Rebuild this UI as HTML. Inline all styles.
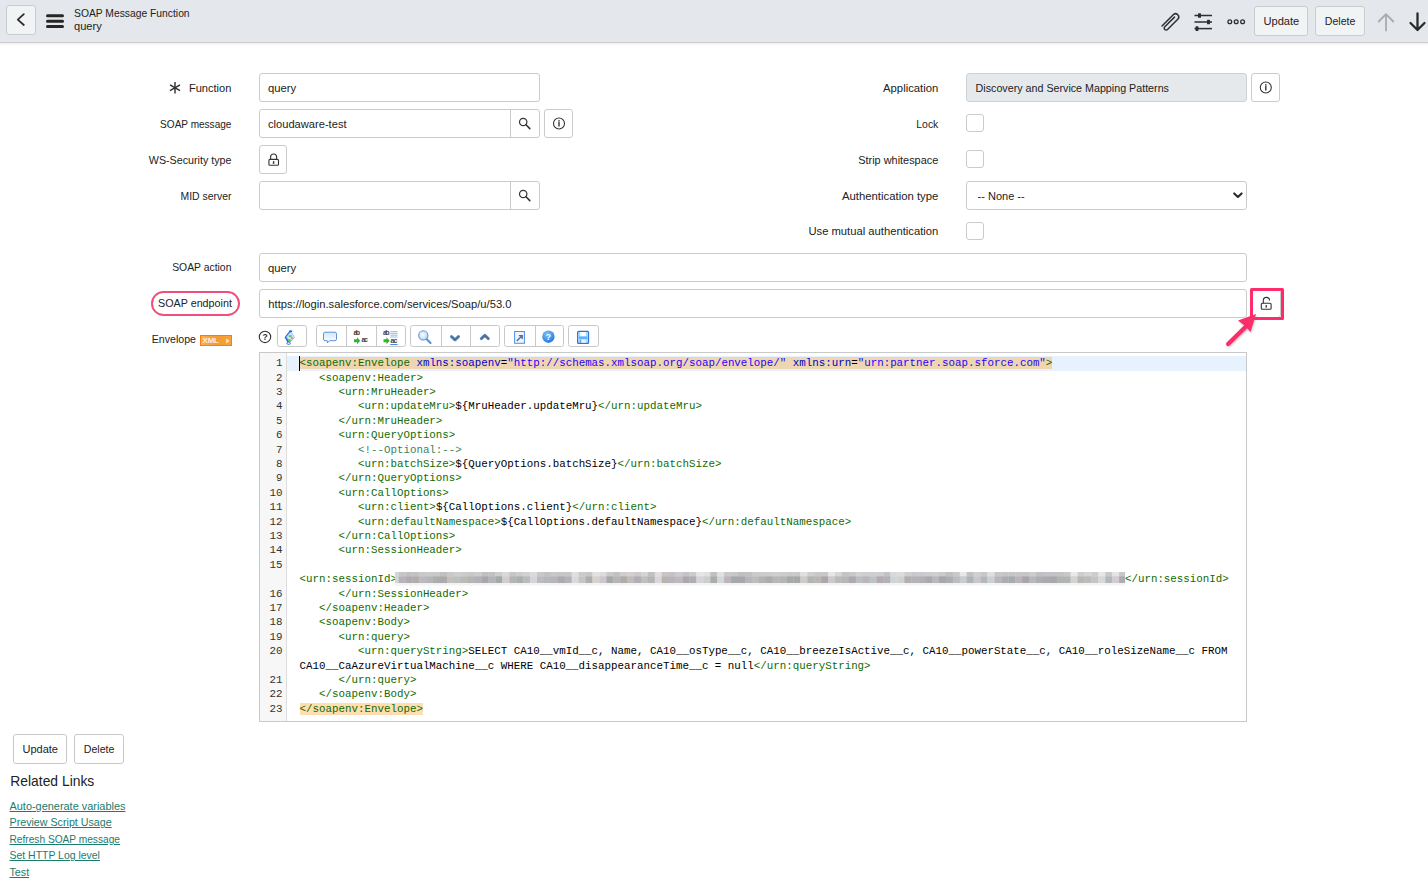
<!DOCTYPE html>
<html><head><meta charset="utf-8">
<style>
*{box-sizing:border-box;margin:0;padding:0}
html,body{width:1428px;height:886px;overflow:hidden;background:#fff}
body{position:relative;font-family:"Liberation Sans",sans-serif;color:#222;font-size:10.8px}
.a{position:absolute}
.t{position:absolute;white-space:nowrap;line-height:1}
.hdr{left:0;top:0;width:1428px;height:43px;background:#e4e8ec;border-bottom:1px solid #cbcbcb}
.shade{left:0;top:43px;width:1428px;height:3px;background:linear-gradient(#f0f0f0,#fff)}
.hbtn{position:absolute;border:1px solid #c9cbcd;border-radius:3px;background:#f2f3f5}
.inp{position:absolute;border:1px solid #cbcbcb;border-radius:3px;background:#fff}
.cb{position:absolute;width:18px;height:18px;border:1px solid #cbcbcb;border-radius:3px;background:#fff}
.lbl{position:absolute;white-space:nowrap;line-height:1;text-align:right}
.btn{position:absolute;border:1px solid #c9c9c9;border-radius:3px;background:#fff}
.tb{position:absolute;top:325px;height:21.5px;border:1px solid #c8c8c8;border-radius:2.5px;background:#fff}
.tbd{position:absolute;top:0;width:1px;height:100%;background:#c8c8c8}
.code{position:absolute;left:299.6px;top:356.1px;font-family:"Liberation Mono",monospace;font-size:10.82px;line-height:14.41px;white-space:pre;color:#000}
.gut{position:absolute;left:260px;top:356.1px;width:22.4px;text-align:right;font-family:"Liberation Mono",monospace;font-size:10.82px;line-height:14.41px;white-space:pre;color:#333}
.tg{color:#116b00}
.at{color:#00c}
.st{color:#2a00ff}
.cm{color:#3f7f5f}
.mt{background:rgba(255,150,0,.3)}
.blur{display:inline-block;width:728px;height:12px;vertical-align:-2px}
a{color:#1a7b6e;text-decoration:underline;text-underline-offset:1.2px}
</style></head><body>
<!-- header -->
<div class="a hdr"></div>
<div class="a shade"></div>
<div class="hbtn" style="left:6px;top:5px;width:30px;height:30px"></div>
<svg class="a" style="left:0;top:0" width="1428" height="42">
  <path d="M23.8 14.2 L17.8 19.6 L23.8 25" fill="none" stroke="#2b2b2b" stroke-width="1.8" stroke-linecap="round" stroke-linejoin="round"/>
  <g stroke="#262626" stroke-width="3" stroke-linecap="round"><line x1="47.5" y1="15.8" x2="62.5" y2="15.8"/><line x1="47.5" y1="21.3" x2="62.5" y2="21.3"/><line x1="47.5" y1="26.6" x2="62.5" y2="26.6"/></g>
</svg>
<div class="t" style="left:74px;top:8.56px;font-size:10.32px">SOAP Message Function</div>
<div class="t" style="left:74px;top:20.90px;font-size:11.1px">query</div>
<!-- header right -->
<svg class="a" style="left:1150px;top:0" width="100" height="42">
  <path d="M12 27.5 L23.5 16 A3.2 3.2 0 0 1 28 20.5 L17.5 31 A1.9 1.9 0 0 1 14.8 28.3 L24.5 18.6" fill="none" stroke="#2e2e2e" stroke-width="1.5" stroke-linecap="round" stroke-linejoin="round" transform="translate(0,-1.5)"/>
  <g stroke="#2e2e2e" stroke-width="1.5"><line x1="44.5" y1="15.5" x2="62" y2="15.5"/><line x1="44.5" y1="22" x2="62" y2="22"/><line x1="44.5" y1="28.6" x2="62" y2="28.6"/></g>
  <g fill="#2e2e2e"><rect x="48" y="13.2" width="3" height="4.6" rx="0.6"/><rect x="57" y="19.7" width="3" height="4.6" rx="0.6"/><rect x="45.5" y="26.3" width="3" height="4.6" rx="0.6"/></g>
  <g fill="none" stroke="#2e2e2e" stroke-width="1.3"><circle cx="79.8" cy="21.8" r="1.9"/><circle cx="86.2" cy="21.8" r="1.9"/><circle cx="92.6" cy="21.8" r="1.9"/></g>
</svg>
<div class="hbtn" style="left:1254px;top:6px;width:54px;height:30px"></div>
<div class="t" style="left:1263.5px;top:15.90px;font-size:11.1px">Update</div>
<div class="hbtn" style="left:1315px;top:6px;width:50px;height:30px"></div>
<div class="t" style="left:1324.8px;top:16.31px;font-size:10.62px">Delete</div>
<svg class="a" style="left:1370px;top:0" width="58" height="42">
  <path d="M16 30.5 V14.5 M8.7 21.5 L16 14.2 L23.3 21.5" fill="none" stroke="#a9abad" stroke-width="1.8" stroke-linecap="round" stroke-linejoin="round"/>
  <path d="M47.5 13.5 V30 M40.5 23 L47.5 30 L54.5 23" fill="none" stroke="#2b2b2b" stroke-width="2.3" stroke-linecap="round" stroke-linejoin="round"/>
</svg>

<!-- form left column -->
<svg class="a" style="left:168px;top:81px" width="15" height="14"><g stroke="#2e2e2e" stroke-width="1.4" stroke-linecap="butt"><line x1="7" y1="1" x2="7" y2="12.5"/><line x1="2" y1="3.9" x2="12" y2="9.6"/><line x1="2" y1="9.6" x2="12" y2="3.9"/></g></svg>
<div class="lbl" style="right:1196.6px;top:82.92px;font-size:11.08px">Function</div>
<div class="inp" style="left:259px;top:73px;width:281px;height:29px"></div>
<div class="t" style="left:268px;top:82.73px;font-size:11.3px">query</div>

<div class="lbl" style="right:1196.6px;top:119.78px;font-size:10.06px">SOAP message</div>
<div class="inp" style="left:259px;top:109px;width:281px;height:29px"></div>
<div class="a" style="left:510px;top:109px;width:1px;height:29px;background:#cbcbcb"></div>
<div class="t" style="left:268px;top:118.88px;font-size:11.13px">cloudaware-test</div>
<div class="inp" style="left:544px;top:109px;width:29px;height:29px"></div>

<div class="lbl" style="right:1196.6px;top:155.25px;font-size:10.69px">WS-Security type</div>
<div class="inp" style="left:259px;top:145px;width:28px;height:29px"></div>

<div class="lbl" style="right:1196.6px;top:191.99px;font-size:10.41px">MID server</div>
<div class="inp" style="left:259px;top:181px;width:281px;height:29px"></div>
<div class="a" style="left:510px;top:181px;width:1px;height:29px;background:#cbcbcb"></div>

<!-- form right column -->
<div class="lbl" style="right:489.7px;top:82.73px;font-size:11.3px">Application</div>
<div class="inp" style="left:966px;top:73px;width:281px;height:29px;background:#e6e9eb;border-color:#cfd2d4"></div>
<div class="t" style="left:975.6px;top:83.23px;font-size:10.71px">Discovery and Service Mapping Patterns</div>
<div class="inp" style="left:1251px;top:73px;width:29px;height:29px"></div>

<div class="lbl" style="right:489.7px;top:119.99px;font-size:10.41px">Lock</div>
<div class="cb" style="left:966px;top:114px"></div>
<div class="lbl" style="right:489.7px;top:155.05px;font-size:10.93px">Strip whitespace</div>
<div class="cb" style="left:966px;top:150px"></div>
<div class="lbl" style="right:489.7px;top:190.71px;font-size:11.33px">Authentication type</div>
<div class="inp" style="left:966px;top:181px;width:281px;height:29px"></div>
<div class="t" style="left:977.6px;top:190.99px;font-size:11px">-- None --</div>
<svg class="a" style="left:1230px;top:189px" width="16" height="12"><path d="M4.2 4.4 L7.9 8 L11.6 4.4" fill="none" stroke="#2b2b2b" stroke-width="2.1" stroke-linecap="round" stroke-linejoin="round"/></svg>
<div class="lbl" style="right:489.7px;top:225.79px;font-size:11.24px">Use mutual authentication</div>
<div class="cb" style="left:966px;top:222px"></div>

<!-- full-width -->
<div class="lbl" style="right:1196.6px;top:262.50px;font-size:10.39px">SOAP action</div>
<div class="inp" style="left:259px;top:253px;width:988px;height:29px"></div>
<div class="t" style="left:268px;top:262.73px;font-size:11.3px">query</div>

<div class="a" style="left:151.4px;top:291.2px;width:88.6px;height:24.6px;border:2px solid #ef4f7f;border-radius:13px"></div>
<div class="lbl" style="right:1196.1px;top:298.20px;font-size:10.75px">SOAP endpoint</div>
<div class="inp" style="left:259px;top:289px;width:988px;height:29px"></div>
<div class="t" style="left:268.3px;top:298.82px;font-size:11.2px">https://login.salesforce.com/services/Soap/u/53.0</div>
<div class="inp" style="left:1251px;top:289px;width:30px;height:29px"></div>

<div class="t" style="left:151.8px;top:334.34px;font-size:10.58px">Envelope</div>
<div class="a" style="left:200.2px;top:335.2px;width:31.8px;height:10.6px;background:linear-gradient(90deg,#fcb048,#f59a30 55%,#f8a43a);border:1px solid #ff7a0a"></div>

<!-- icons -->
<svg class="a" style="left:0;top:0" width="1428" height="886">
  <defs>
    <g id="srch"><circle cx="0" cy="0" r="3.7" fill="none" stroke="#333" stroke-width="1.2"/><line x1="2.8" y1="2.8" x2="6.6" y2="6.6" stroke="#333" stroke-width="1.6" stroke-linecap="round"/></g>
    <g id="info"><circle cx="0" cy="0" r="5.5" fill="none" stroke="#333" stroke-width="1.1"/><rect x="-0.75" y="-3.4" width="1.5" height="1.4" fill="#444"/><rect x="-0.75" y="-1.6" width="1.5" height="4.6" fill="#444"/></g>
  </defs>
  <use href="#srch" x="523.2" y="122"/>
  <use href="#srch" x="523.2" y="194"/>
  <use href="#info" x="559" y="123.5"/>
  <use href="#info" x="1265.8" y="87.5"/>
  <g fill="none" stroke="#333" stroke-width="1.1">
    <path d="M270.6 159.4 V157 A3 3 0 0 1 276.6 157 V159.4"/>
    <rect x="268.9" y="159.4" width="9.6" height="5.8" rx="1"/>
  </g>
  <path d="M273.1 161 h1 l0.4 2.8 h-1.8 z" fill="#333"/>
</svg>

<!-- envelope toolbar -->
<div class="t" style="left:202.6px;top:337.2px;font-size:8px;color:#fdeee0;font-weight:bold;letter-spacing:-0.3px">XML</div>
<svg class="a" style="left:223px;top:337px" width="8" height="8"><path d="M3.2 1.6 L6.6 4 L3.2 6.4 z" fill="#fde8c0"/></svg>
<div class="tb" style="left:276.5px;width:30px"></div>
<div class="tb" style="left:316px;width:90px"><div class="tbd" style="left:29px"></div><div class="tbd" style="left:58.5px"></div></div>
<div class="tb" style="left:410px;width:90px"><div class="tbd" style="left:29.5px;width:1.6px"></div><div class="tbd" style="left:58.8px"></div></div>
<div class="tb" style="left:504px;width:60px"><div class="tbd" style="left:29.5px"></div></div>
<div class="tb" style="left:568px;width:30.5px"></div>
<svg class="a" style="left:250px;top:320px" width="360" height="30">
  <defs>
    <linearGradient id="lg1" x1="0" y1="0" x2="0" y2="1"><stop offset="0" stop-color="#d6e6fb"/><stop offset="1" stop-color="#fff"/></linearGradient>
    <radialGradient id="rg1" cx="0.45" cy="0.45" r="0.6"><stop offset="0" stop-color="#fff"/><stop offset="1" stop-color="#aed2f7"/></radialGradient>
    <radialGradient id="rg2" cx="0.4" cy="0.3" r="0.8"><stop offset="0" stop-color="#7cc4ff"/><stop offset="1" stop-color="#1a6fd8"/></radialGradient>
  </defs>
  <!-- help circle -->
  <circle cx="15" cy="16.9" r="5.7" fill="none" stroke="#333" stroke-width="1.1"/>
  <text x="15" y="20.1" font-family="Liberation Sans" font-weight="bold" font-size="8.5" text-anchor="middle" fill="#333">?</text>
  <!-- format icon -->
  <path d="M39.8 10.6 L42 11.6 L36.3 17 L39.8 22.6 L38.6 24.4 L34.6 17.3 Z" fill="#2466e6"/>
  <path d="M40 12.2 L36.6 16.8 L39.9 22 L44.6 17.6 L41.8 13.2 Z" fill="#d9e8fb" stroke="#7aa8f0" stroke-width="0.7"/>
  <ellipse cx="38.6" cy="23.2" rx="1.7" ry="1.2" fill="#fff" stroke="#2a6ef0" stroke-width="1"/>
  <ellipse cx="40.8" cy="11.2" rx="1.6" ry="0.9" fill="#2466e6"/>
  <rect x="38.7" y="15.2" width="3" height="1.9" fill="#55cc55"/><rect x="37.9" y="19.3" width="3" height="1.9" fill="#55cc55"/><rect x="40.9" y="17.2" width="1.9" height="1.9" fill="#ef7a7a"/>
  <!-- comment bubble -->
  <path d="M75 12.2 H85 A1.5 1.5 0 0 1 86.5 13.7 V19.2 A1.5 1.5 0 0 1 85 20.7 H79.5 L77.3 23 V20.7 H75 A1.5 1.5 0 0 1 73.5 19.2 V13.7 A1.5 1.5 0 0 1 75 12.2 Z" fill="url(#lg1)" stroke="#5a93d8" stroke-width="1"/>
  <!-- ab->ac -->
  <text x="103.6" y="15.4" font-family="Liberation Sans" font-weight="bold" font-size="7" fill="#444" textLength="6.5">ab</text>
  <path d="M104 19.2 h3 v-2 l3.2 3.5 l-3.2 3.5 v-2 h-3 z" fill="#2fb52f"/>
  <text x="111.4" y="22.2" font-family="Liberation Sans" font-weight="bold" font-size="7" fill="#444" textLength="6.5">ac</text>
  <text x="133" y="15.4" font-family="Liberation Sans" font-weight="bold" font-size="7" fill="#444" textLength="6.5">ab</text>
  <g stroke="#8db6e6" stroke-width="0.9"><line x1="140.2" y1="11.6" x2="147.6" y2="11.6"/><line x1="140.2" y1="13.4" x2="147.6" y2="13.4"/><line x1="140.2" y1="15.2" x2="147.6" y2="15.2"/><line x1="140.2" y1="17" x2="147.6" y2="17"/></g>
  <path d="M133.5 19.2 h3 v-2 l3.2 3.5 l-3.2 3.5 v-2 h-3 z" fill="#2fb52f"/>
  <text x="140.4" y="23.2" font-family="Liberation Sans" font-weight="bold" font-size="7" fill="#444" textLength="7">ac</text>
  <line x1="140.2" y1="24.6" x2="147.6" y2="24.6" stroke="#3b7ddd" stroke-width="1"/>
  <!-- magnifier -->
  <line x1="176.5" y1="19" x2="180.5" y2="23" stroke="#5c8fd0" stroke-width="2.2" stroke-linecap="round"/>
  <circle cx="173.3" cy="15.4" r="4.6" fill="url(#rg1)" stroke="#5b9be0" stroke-width="1.1"/>
  <!-- chevrons -->
  <path d="M201.5 16.6 L205 19.8 L208.5 16.6" fill="none" stroke="#4a86d6" stroke-width="3" stroke-linecap="round" stroke-linejoin="round"/>
  <path d="M201.5 16.6 L205 19.8 L208.5 16.6" fill="none" stroke="#666" stroke-width="1.2" stroke-linecap="round" stroke-linejoin="round"/>
  <path d="M231.3 18.6 L234.8 15.4 L238.3 18.6" fill="none" stroke="#4a86d6" stroke-width="3" stroke-linecap="round" stroke-linejoin="round"/>
  <path d="M231.3 18.6 L234.8 15.4 L238.3 18.6" fill="none" stroke="#666" stroke-width="1.2" stroke-linecap="round" stroke-linejoin="round"/>
  <!-- maximize -->
  <rect x="264.6" y="11.5" width="9.8" height="11.8" fill="#eef5fd" stroke="#4f8ee6" stroke-width="1"/>
  <path d="M266.8 21 L271.8 16 M268.8 15.6 H272.2 V19" fill="none" stroke="#4a6f99" stroke-width="1.4"/>
  <!-- help blue -->
  <circle cx="298.4" cy="16.7" r="6.2" fill="url(#rg2)"/>
  <text x="298.4" y="20" font-family="Liberation Sans" font-weight="bold" font-size="8.5" text-anchor="middle" fill="#fff">?</text>
  <!-- save -->
  <rect x="327.6" y="11.4" width="11" height="12" rx="1" fill="#a8dcff" stroke="#2f6fe0" stroke-width="1.1"/>
  <rect x="330.2" y="12" width="5.6" height="4.3" fill="#fdfeff"/>
  <rect x="329" y="16.5" width="8.4" height="2.6" fill="#55b8ff"/>
  <rect x="331.4" y="19.5" width="4.4" height="3.3" fill="#e9f3fc"/>
  <rect x="330.2" y="19.8" width="0.9" height="3" fill="#7d83d0"/>
  </svg>

<!-- editor -->
<div class="a" style="left:259px;top:352px;width:988px;height:370px;border:1px solid #c9c9c9;background:#fff"></div>
<div class="a" style="left:260px;top:353px;width:26.5px;height:368px;background:#f7f7f7;border-right:1px solid #ddd"></div>
<div class="a" style="left:287px;top:356.1px;width:959px;height:14.41px;background:#e8f2ff"></div>
<div class="a" style="left:299px;top:356.1px;width:1.3px;height:14.6px;background:#000"></div>
<div class="code"><span class="mt"><span class="tg">&lt;soapenv:Envelope</span> <span class="at">xmlns:soapenv</span>=<span class="st">"http://schemas.xmlsoap.org/soap/envelope/"</span> <span class="at">xmlns:urn</span>=<span class="st">"urn:partner.soap.sforce.com"</span><span class="tg">&gt;</span></span>
   <span class="tg">&lt;soapenv:Header&gt;</span>
      <span class="tg">&lt;urn:MruHeader&gt;</span>
         <span class="tg">&lt;urn:updateMru&gt;</span>${MruHeader.updateMru}<span class="tg">&lt;/urn:updateMru&gt;</span>
      <span class="tg">&lt;/urn:MruHeader&gt;</span>
      <span class="tg">&lt;urn:QueryOptions&gt;</span>
         <span class="cm">&lt;!--Optional:--&gt;</span>
         <span class="tg">&lt;urn:batchSize&gt;</span>${QueryOptions.batchSize}<span class="tg">&lt;/urn:batchSize&gt;</span>
      <span class="tg">&lt;/urn:QueryOptions&gt;</span>
      <span class="tg">&lt;urn:CallOptions&gt;</span>
         <span class="tg">&lt;urn:client&gt;</span>${CallOptions.client}<span class="tg">&lt;/urn:client&gt;</span>
         <span class="tg">&lt;urn:defaultNamespace&gt;</span>${CallOptions.defaultNamespace}<span class="tg">&lt;/urn:defaultNamespace&gt;</span>
      <span class="tg">&lt;/urn:CallOptions&gt;</span>
      <span class="tg">&lt;urn:SessionHeader&gt;</span>
         
<span class="tg">&lt;urn:sessionId&gt;</span><span class="blur"></span><span class="tg">&lt;/urn:sessionId&gt;</span>
      <span class="tg">&lt;/urn:SessionHeader&gt;</span>
   <span class="tg">&lt;/soapenv:Header&gt;</span>
   <span class="tg">&lt;soapenv:Body&gt;</span>
      <span class="tg">&lt;urn:query&gt;</span>
         <span class="tg">&lt;urn:queryString&gt;</span>SELECT CA10__vmId__c, Name, CA10__osType__c, CA10__breezeIsActive__c, CA10__powerState__c, CA10__roleSizeName__c FROM
CA10__CaAzureVirtualMachine__c WHERE CA10__disappearanceTime__c = null<span class="tg">&lt;/urn:queryString&gt;</span>
      <span class="tg">&lt;/urn:query&gt;</span>
   <span class="tg">&lt;/soapenv:Body&gt;</span>
<span class="mt"><span class="tg">&lt;/soapenv:Envelope&gt;</span></span></div>
<div class="gut">1
2
3
4
5
6
7
8
9
10
11
12
13
14
15

16
17
18
19
20

21
22
23</div>

<svg class="a" style="left:0;top:0" width="1428" height="886"><defs><filter id="bl" x="-1%" y="-30%" width="102%" height="160%"><feGaussianBlur stdDeviation="0.6"/></filter></defs><g filter="url(#bl)"><rect x="394.9" y="572" width="3.5" height="11.2" fill="#d0dbd0"/><rect x="398.40" y="572" width="7.23" height="4.3" fill="#c7c4ca"/><rect x="398.40" y="576.2" width="7.23" height="7" fill="#b6b3b9"/><rect x="405.33" y="572" width="7.23" height="4.3" fill="#c2bfc5"/><rect x="405.33" y="576.2" width="7.23" height="7" fill="#aeabb1"/><rect x="412.26" y="572" width="7.23" height="4.3" fill="#c4c1be"/><rect x="412.26" y="576.2" width="7.23" height="7" fill="#b0adaa"/><rect x="419.19" y="572" width="7.23" height="4.3" fill="#c9c6cc"/><rect x="419.19" y="576.2" width="7.23" height="7" fill="#bbb8be"/><rect x="426.12" y="572" width="7.23" height="4.3" fill="#c7cbcb"/><rect x="426.12" y="576.2" width="7.23" height="7" fill="#b3b7b7"/><rect x="433.05" y="572" width="7.23" height="4.3" fill="#c9c9c9"/><rect x="433.05" y="576.2" width="7.23" height="7" fill="#adadad"/><rect x="439.98" y="572" width="7.23" height="4.3" fill="#c0c0c0"/><rect x="439.98" y="576.2" width="7.23" height="7" fill="#aaaaaa"/><rect x="446.91" y="572" width="7.23" height="4.3" fill="#cbc8c5"/><rect x="446.91" y="576.2" width="7.23" height="7" fill="#c3c0bd"/><rect x="453.84" y="572" width="7.23" height="4.3" fill="#ccd0d0"/><rect x="453.84" y="576.2" width="7.23" height="7" fill="#bcc0c0"/><rect x="460.77" y="572" width="7.23" height="4.3" fill="#cdcac7"/><rect x="460.77" y="576.2" width="7.23" height="7" fill="#bcb9b6"/><rect x="467.70" y="572" width="7.23" height="4.3" fill="#c8c8c8"/><rect x="467.70" y="576.2" width="7.23" height="7" fill="#b5b5b5"/><rect x="474.63" y="572" width="7.23" height="4.3" fill="#cecad0"/><rect x="474.63" y="576.2" width="7.23" height="7" fill="#b4b0b6"/><rect x="481.56" y="572" width="7.23" height="4.3" fill="#c1bec4"/><rect x="481.56" y="576.2" width="7.23" height="7" fill="#a8a5ab"/><rect x="488.49" y="572" width="7.23" height="4.3" fill="#bfc1c3"/><rect x="488.49" y="576.2" width="7.23" height="7" fill="#b2b4b6"/><rect x="495.42" y="572" width="7.23" height="4.3" fill="#cacece"/><rect x="495.42" y="576.2" width="7.23" height="7" fill="#a5a9a9"/><rect x="502.35" y="572" width="7.23" height="4.3" fill="#dbd8d5"/><rect x="502.35" y="576.2" width="7.23" height="7" fill="#d1cecb"/><rect x="509.28" y="572" width="7.23" height="4.3" fill="#c6c6c6"/><rect x="509.28" y="576.2" width="7.23" height="7" fill="#b4b4b4"/><rect x="516.21" y="572" width="7.23" height="4.3" fill="#c9cdcd"/><rect x="516.21" y="576.2" width="7.23" height="7" fill="#abafaf"/><rect x="523.14" y="572" width="7.23" height="4.3" fill="#cfd1d3"/><rect x="523.14" y="576.2" width="7.23" height="7" fill="#b9bbbd"/><rect x="530.07" y="572" width="7.23" height="4.3" fill="#dcd8de"/><rect x="530.07" y="576.2" width="7.23" height="7" fill="#d7d3d9"/><rect x="537.00" y="572" width="7.23" height="4.3" fill="#c8c8c8"/><rect x="537.00" y="576.2" width="7.23" height="7" fill="#bcbcbc"/><rect x="543.93" y="572" width="7.23" height="4.3" fill="#bfc3c3"/><rect x="543.93" y="576.2" width="7.23" height="7" fill="#b4b8b8"/><rect x="550.86" y="572" width="7.23" height="4.3" fill="#cac6cc"/><rect x="550.86" y="576.2" width="7.23" height="7" fill="#b8b4ba"/><rect x="557.79" y="572" width="7.23" height="4.3" fill="#c3c7c7"/><rect x="557.79" y="576.2" width="7.23" height="7" fill="#a9adad"/><rect x="564.72" y="572" width="7.23" height="4.3" fill="#c8c4ca"/><rect x="564.72" y="576.2" width="7.23" height="7" fill="#b6b2b8"/><rect x="571.65" y="572" width="7.23" height="4.3" fill="#e0e0e0"/><rect x="571.65" y="576.2" width="7.23" height="7" fill="#dadada"/><rect x="578.58" y="572" width="7.23" height="4.3" fill="#cbcbcb"/><rect x="578.58" y="576.2" width="7.23" height="7" fill="#c5c5c5"/><rect x="585.51" y="572" width="7.23" height="4.3" fill="#c5c7c9"/><rect x="585.51" y="576.2" width="7.23" height="7" fill="#acaeb0"/><rect x="592.44" y="572" width="7.23" height="4.3" fill="#e3e0dd"/><rect x="592.44" y="576.2" width="7.23" height="7" fill="#d5d2cf"/><rect x="599.37" y="572" width="7.23" height="4.3" fill="#dddae0"/><rect x="599.37" y="576.2" width="7.23" height="7" fill="#cac7cd"/><rect x="606.30" y="572" width="7.23" height="4.3" fill="#c7c9cb"/><rect x="606.30" y="576.2" width="7.23" height="7" fill="#a6a8aa"/><rect x="613.23" y="572" width="7.23" height="4.3" fill="#c2bfc5"/><rect x="613.23" y="576.2" width="7.23" height="7" fill="#b6b3b9"/><rect x="620.16" y="572" width="7.23" height="4.3" fill="#d0cdca"/><rect x="620.16" y="576.2" width="7.23" height="7" fill="#afaca9"/><rect x="627.09" y="572" width="7.23" height="4.3" fill="#d3cfd5"/><rect x="627.09" y="576.2" width="7.23" height="7" fill="#bfbbc1"/><rect x="634.02" y="572" width="7.23" height="4.3" fill="#cdc9cf"/><rect x="634.02" y="576.2" width="7.23" height="7" fill="#b1adb3"/><rect x="640.95" y="572" width="7.23" height="4.3" fill="#d7d4d1"/><rect x="640.95" y="576.2" width="7.23" height="7" fill="#c2bfbc"/><rect x="647.88" y="572" width="7.23" height="4.3" fill="#c0c0c0"/><rect x="647.88" y="576.2" width="7.23" height="7" fill="#b5b5b5"/><rect x="654.81" y="572" width="7.23" height="4.3" fill="#e1dde3"/><rect x="654.81" y="576.2" width="7.23" height="7" fill="#dad6dc"/><rect x="661.74" y="572" width="7.23" height="4.3" fill="#c7c4c1"/><rect x="661.74" y="576.2" width="7.23" height="7" fill="#b7b4b1"/><rect x="668.67" y="572" width="7.23" height="4.3" fill="#c4c1c7"/><rect x="668.67" y="576.2" width="7.23" height="7" fill="#b7b4ba"/><rect x="675.60" y="572" width="7.23" height="4.3" fill="#cecad0"/><rect x="675.60" y="576.2" width="7.23" height="7" fill="#bdb9bf"/><rect x="682.53" y="572" width="7.23" height="4.3" fill="#c6c2c8"/><rect x="682.53" y="576.2" width="7.23" height="7" fill="#aca8ae"/><rect x="689.46" y="572" width="7.23" height="4.3" fill="#cbcbcb"/><rect x="689.46" y="576.2" width="7.23" height="7" fill="#aeaeae"/><rect x="696.39" y="572" width="7.23" height="4.3" fill="#e7e3e9"/><rect x="696.39" y="576.2" width="7.23" height="7" fill="#d7d3d9"/><rect x="703.32" y="572" width="7.23" height="4.3" fill="#dee0e2"/><rect x="703.32" y="576.2" width="7.23" height="7" fill="#cbcdcf"/><rect x="710.25" y="572" width="7.23" height="4.3" fill="#bfc1c3"/><rect x="710.25" y="576.2" width="7.23" height="7" fill="#aaacae"/><rect x="717.18" y="572" width="7.23" height="4.3" fill="#dee2e2"/><rect x="717.18" y="576.2" width="7.23" height="7" fill="#d3d7d7"/><rect x="724.11" y="572" width="7.23" height="4.3" fill="#cbc7cd"/><rect x="724.11" y="576.2" width="7.23" height="7" fill="#bab6bc"/><rect x="731.04" y="572" width="7.23" height="4.3" fill="#c5c7c9"/><rect x="731.04" y="576.2" width="7.23" height="7" fill="#a6a8aa"/><rect x="737.97" y="572" width="7.23" height="4.3" fill="#c0bdc3"/><rect x="737.97" y="576.2" width="7.23" height="7" fill="#a9a6ac"/><rect x="744.90" y="572" width="7.23" height="4.3" fill="#bec2c2"/><rect x="744.90" y="576.2" width="7.23" height="7" fill="#b4b8b8"/><rect x="751.83" y="572" width="7.23" height="4.3" fill="#cacaca"/><rect x="751.83" y="576.2" width="7.23" height="7" fill="#bdbdbd"/><rect x="758.76" y="572" width="7.23" height="4.3" fill="#cbcbcb"/><rect x="758.76" y="576.2" width="7.23" height="7" fill="#b3b3b3"/><rect x="765.69" y="572" width="7.23" height="4.3" fill="#caccce"/><rect x="765.69" y="576.2" width="7.23" height="7" fill="#aaacae"/><rect x="772.62" y="572" width="7.23" height="4.3" fill="#cecece"/><rect x="772.62" y="576.2" width="7.23" height="7" fill="#b7b7b7"/><rect x="779.55" y="572" width="7.23" height="4.3" fill="#cccccc"/><rect x="779.55" y="576.2" width="7.23" height="7" fill="#b5b5b5"/><rect x="786.48" y="572" width="7.23" height="4.3" fill="#c6caca"/><rect x="786.48" y="576.2" width="7.23" height="7" fill="#a5a9a9"/><rect x="793.41" y="572" width="7.23" height="4.3" fill="#c9c9c9"/><rect x="793.41" y="576.2" width="7.23" height="7" fill="#a8a8a8"/><rect x="800.34" y="572" width="7.23" height="4.3" fill="#e2dfdc"/><rect x="800.34" y="576.2" width="7.23" height="7" fill="#cecbc8"/><rect x="807.27" y="572" width="7.23" height="4.3" fill="#cbcfcf"/><rect x="807.27" y="576.2" width="7.23" height="7" fill="#b1b5b5"/><rect x="814.20" y="572" width="7.23" height="4.3" fill="#cac7c4"/><rect x="814.20" y="576.2" width="7.23" height="7" fill="#b9b6b3"/><rect x="821.13" y="572" width="7.23" height="4.3" fill="#c8c5cb"/><rect x="821.13" y="576.2" width="7.23" height="7" fill="#aaa7ad"/><rect x="828.06" y="572" width="7.23" height="4.3" fill="#e6e6e6"/><rect x="828.06" y="576.2" width="7.23" height="7" fill="#cacaca"/><rect x="834.99" y="572" width="7.23" height="4.3" fill="#d7d4da"/><rect x="834.99" y="576.2" width="7.23" height="7" fill="#bcb9bf"/><rect x="841.92" y="572" width="7.23" height="4.3" fill="#c4c4c4"/><rect x="841.92" y="576.2" width="7.23" height="7" fill="#b7b7b7"/><rect x="848.85" y="572" width="7.23" height="4.3" fill="#cac7cd"/><rect x="848.85" y="576.2" width="7.23" height="7" fill="#aca9af"/><rect x="855.78" y="572" width="7.23" height="4.3" fill="#cfd3d3"/><rect x="855.78" y="576.2" width="7.23" height="7" fill="#bbbfbf"/><rect x="862.71" y="572" width="7.23" height="4.3" fill="#d0ccd2"/><rect x="862.71" y="576.2" width="7.23" height="7" fill="#b9b5bb"/><rect x="869.64" y="572" width="7.23" height="4.3" fill="#cbcfcf"/><rect x="869.64" y="576.2" width="7.23" height="7" fill="#bec2c2"/><rect x="876.57" y="572" width="7.23" height="4.3" fill="#d0ccd2"/><rect x="876.57" y="576.2" width="7.23" height="7" fill="#b0acb2"/><rect x="883.50" y="572" width="7.23" height="4.3" fill="#c5c1c7"/><rect x="883.50" y="576.2" width="7.23" height="7" fill="#b4b0b6"/><rect x="890.43" y="572" width="7.23" height="4.3" fill="#d5d9d9"/><rect x="890.43" y="576.2" width="7.23" height="7" fill="#d0d4d4"/><rect x="897.36" y="572" width="7.23" height="4.3" fill="#dcdcdc"/><rect x="897.36" y="576.2" width="7.23" height="7" fill="#d0d0d0"/><rect x="904.29" y="572" width="7.23" height="4.3" fill="#d0ccd2"/><rect x="904.29" y="576.2" width="7.23" height="7" fill="#b2aeb4"/><rect x="911.22" y="572" width="7.23" height="4.3" fill="#cac7cd"/><rect x="911.22" y="576.2" width="7.23" height="7" fill="#b4b1b7"/><rect x="918.15" y="572" width="7.23" height="4.3" fill="#cbc8ce"/><rect x="918.15" y="576.2" width="7.23" height="7" fill="#b2afb5"/><rect x="925.08" y="572" width="7.23" height="4.3" fill="#cdcdcd"/><rect x="925.08" y="576.2" width="7.23" height="7" fill="#aaaaaa"/><rect x="932.01" y="572" width="7.23" height="4.3" fill="#d0cdd3"/><rect x="932.01" y="576.2" width="7.23" height="7" fill="#bab7bd"/><rect x="938.94" y="572" width="7.23" height="4.3" fill="#ccc8ce"/><rect x="938.94" y="576.2" width="7.23" height="7" fill="#aaa6ac"/><rect x="945.87" y="572" width="7.23" height="4.3" fill="#bec0c2"/><rect x="945.87" y="576.2" width="7.23" height="7" fill="#acaeb0"/><rect x="952.80" y="572" width="7.23" height="4.3" fill="#c6caca"/><rect x="952.80" y="576.2" width="7.23" height="7" fill="#babebe"/><rect x="959.73" y="572" width="7.23" height="4.3" fill="#e5e9e9"/><rect x="959.73" y="576.2" width="7.23" height="7" fill="#c8cccc"/><rect x="966.66" y="572" width="7.23" height="4.3" fill="#bec2c2"/><rect x="966.66" y="576.2" width="7.23" height="7" fill="#b0b4b4"/><rect x="973.59" y="572" width="7.23" height="4.3" fill="#d2ced4"/><rect x="973.59" y="576.2" width="7.23" height="7" fill="#cac6cc"/><rect x="980.52" y="572" width="7.23" height="4.3" fill="#c5c9c9"/><rect x="980.52" y="576.2" width="7.23" height="7" fill="#b4b8b8"/><rect x="987.45" y="572" width="7.23" height="4.3" fill="#dddfe1"/><rect x="987.45" y="576.2" width="7.23" height="7" fill="#cdcfd1"/><rect x="994.38" y="572" width="7.23" height="4.3" fill="#c8c5cb"/><rect x="994.38" y="576.2" width="7.23" height="7" fill="#b8b5bb"/><rect x="1001.31" y="572" width="7.23" height="4.3" fill="#c3c7c7"/><rect x="1001.31" y="576.2" width="7.23" height="7" fill="#aaaeae"/><rect x="1008.24" y="572" width="7.23" height="4.3" fill="#c3c7c7"/><rect x="1008.24" y="576.2" width="7.23" height="7" fill="#a7abab"/><rect x="1015.17" y="572" width="7.23" height="4.3" fill="#c9c5cb"/><rect x="1015.17" y="576.2" width="7.23" height="7" fill="#b8b4ba"/><rect x="1022.10" y="572" width="7.23" height="4.3" fill="#c6c3c9"/><rect x="1022.10" y="576.2" width="7.23" height="7" fill="#a8a5ab"/><rect x="1029.03" y="572" width="7.23" height="4.3" fill="#caccce"/><rect x="1029.03" y="576.2" width="7.23" height="7" fill="#b6b8ba"/><rect x="1035.96" y="572" width="7.23" height="4.3" fill="#bec2c2"/><rect x="1035.96" y="576.2" width="7.23" height="7" fill="#abafaf"/><rect x="1042.89" y="572" width="7.23" height="4.3" fill="#c5c1c7"/><rect x="1042.89" y="576.2" width="7.23" height="7" fill="#ada9af"/><rect x="1049.82" y="572" width="7.23" height="4.3" fill="#c4c1c7"/><rect x="1049.82" y="576.2" width="7.23" height="7" fill="#aaa7ad"/><rect x="1056.75" y="572" width="7.23" height="4.3" fill="#c1c5c5"/><rect x="1056.75" y="576.2" width="7.23" height="7" fill="#afb3b3"/><rect x="1063.68" y="572" width="7.23" height="4.3" fill="#c8c8c8"/><rect x="1063.68" y="576.2" width="7.23" height="7" fill="#b3b3b3"/><rect x="1070.61" y="572" width="7.23" height="4.3" fill="#ebe8e5"/><rect x="1070.61" y="576.2" width="7.23" height="7" fill="#d5d2cf"/><rect x="1077.54" y="572" width="7.23" height="4.3" fill="#cecece"/><rect x="1077.54" y="576.2" width="7.23" height="7" fill="#b7b7b7"/><rect x="1084.47" y="572" width="7.23" height="4.3" fill="#d5d5d5"/><rect x="1084.47" y="576.2" width="7.23" height="7" fill="#bbbbbb"/><rect x="1091.40" y="572" width="7.23" height="4.3" fill="#cfccc9"/><rect x="1091.40" y="576.2" width="7.23" height="7" fill="#c6c3c0"/><rect x="1098.33" y="572" width="7.23" height="4.3" fill="#e4e8e8"/><rect x="1098.33" y="576.2" width="7.23" height="7" fill="#d5d9d9"/><rect x="1105.26" y="572" width="7.23" height="4.3" fill="#c6caca"/><rect x="1105.26" y="576.2" width="7.23" height="7" fill="#b4b8b8"/><rect x="1112.19" y="572" width="7.23" height="4.3" fill="#e5e2e8"/><rect x="1112.19" y="576.2" width="7.23" height="7" fill="#cfccd2"/><rect x="1119.12" y="572" width="5.98" height="4.3" fill="#c8c5cb"/><rect x="1119.12" y="576.2" width="5.98" height="7" fill="#adaab0"/></g><rect x="394.9" y="583.2" width="730" height="2.3" fill="#f2f4f2"/></svg>
<!-- pink highlight + arrow -->
<div class="a" style="left:1249.5px;top:287.5px;width:34px;height:32.5px;border:3px solid #fd2d6c;border-radius:1.5px"></div>
<svg class="a" style="left:1200px;top:280px" width="100" height="80">
  <defs><filter id="sh" x="-50%" y="-50%" width="200%" height="200%"><feGaussianBlur stdDeviation="1"/></filter></defs>
  <g fill="none" stroke="#333" stroke-width="1.1">
    <path d="M63.3 23.2 V20.5 A3.1 3.1 0 0 1 69.5 20.5"/>
    <rect x="61.3" y="23.2" width="9.8" height="6" rx="1"/>
  </g>
  <path d="M65.7 25 h1 l0.35 2.6 h-1.7 z" fill="#333"/>
  <path d="M56 34 L50.5 52 L47.2 48.2 L29.6 65.4 A2 2 0 0 1 26.6 62.4 L44.2 45.2 L38 40.5 Z" fill="#777" opacity="0.45" filter="url(#sh)" transform="translate(0.8,1.2)"/>
  <path d="M56 34 L50.5 52 L47.2 48.2 L29.6 65.4 A2 2 0 0 1 26.6 62.4 L44.2 45.2 L38 40.5 Z" fill="#fd2d6c"/>
</svg>

<!-- bottom -->
<div class="btn" style="left:13px;top:734px;width:54px;height:30px"></div>
<div class="t" style="left:22.5px;top:743.99px;font-size:11px">Update</div>
<div class="btn" style="left:74px;top:734px;width:50px;height:30px"></div>
<div class="t" style="left:83.8px;top:744.31px;font-size:10.62px">Delete</div>
<div class="t" style="left:10.3px;top:774.57px;font-size:13.86px">Related Links</div>
<div class="t" style="left:9.5px;top:801.05px;font-size:10.93px"><a>Auto-generate variables</a></div>
<div class="t" style="left:9.5px;top:817.24px;font-size:10.7px"><a>Preview Script Usage</a></div>
<div class="t" style="left:9.5px;top:834.70px;font-size:10.16px"><a>Refresh SOAP message</a></div>
<div class="t" style="left:9.5px;top:850.95px;font-size:10.46px"><a>Set HTTP Log level</a></div>
<div class="t" style="left:9.5px;top:867.25px;font-size:10.69px"><a>Test</a></div>
</body></html>
